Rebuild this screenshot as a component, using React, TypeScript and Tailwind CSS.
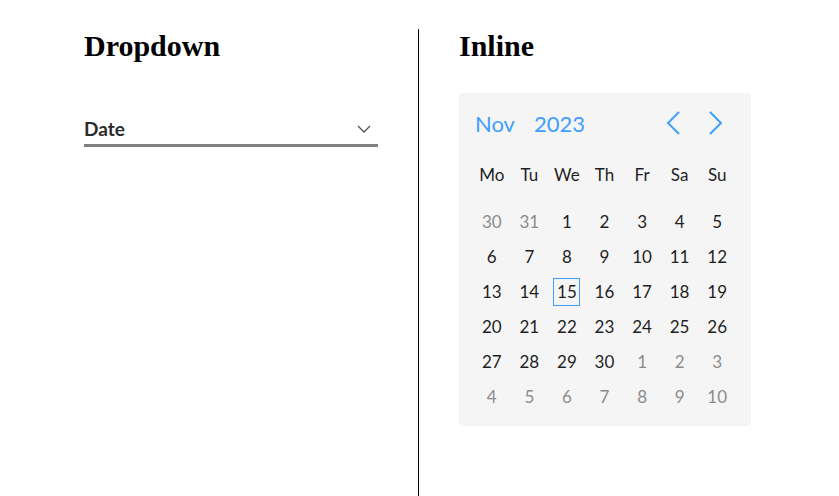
const weekdays = ["Mo", "Tu", "We", "Th", "Fr", "Sa", "Su"];

// 6 weeks shown, Nov 2023 starts on a Wednesday
const days: { d: number; muted: boolean }[] = [
	{ d: 30, muted: true },
	{ d: 31, muted: true },
	...Array.from({ length: 30 }, (_, i) => ({ d: i + 1, muted: false })),
	...Array.from({ length: 10 }, (_, i) => ({ d: i + 1, muted: true })),
];

const Chevron = ({ dir }: { dir: "left" | "right" }) => (
	<svg width="14" height="24" viewBox="0 0 14 24" fill="none" stroke="currentColor" strokeWidth="2">
		<polyline points={dir === "left" ? "13,1 2,12 13,23" : "1,1 12,12 1,23"} />
	</svg>
);

const Calendar = () => (
	<div className="w-[292px] rounded-[4px] bg-[#f5f5f5] px-[14px] pt-[13px] pb-[12px] font-['Lato',sans-serif]">
		<div className="flex h-[34px] items-center text-[22px] text-[#409eff]">
			<span className="ml-[2px]">Nov</span>
			<span className="ml-[19px]">2023</span>
			<div className="ml-auto mr-[14px] flex items-center gap-[29px]">
				<Chevron dir="left" />
				<Chevron dir="right" />
			</div>
		</div>
		<div className="mt-[17px] grid w-[263px] grid-cols-7">
			{weekdays.map((w) => (
				<div key={w} className="flex h-[35px] items-center justify-center text-[17px] text-[#1f1f1f]">
					{w}
				</div>
			))}
		</div>
		<div className="mt-[12px] grid w-[263px] grid-cols-7">
			{days.map((day, i) => (
				<div key={i} className="flex h-[35px] items-center justify-center">
					<span
						className={`flex h-[28px] w-[27px] items-center justify-center text-[17px] ${
							day.muted ? "text-[#8c8c8c]" : "text-[#1f1f1f]"
						} ${!day.muted && day.d === 15 ? "border border-[#409eff]" : ""}`}
					>
						{day.d}
					</span>
				</div>
			))}
		</div>
	</div>
);

export default function App() {
	return (
		<div className="flex min-h-[496px] bg-white pt-[29px] font-['Liberation_Serif',serif]">
			<div className="ml-[44px] w-[375px] border-r border-black px-10">
				<h2 className="text-[30px] font-bold leading-[33px] text-black">Dropdown</h2>
				<div className="mt-[55px] flex h-[30px] items-start justify-between border-b-[3px] border-[#808080] pr-[7px] font-['Lato',sans-serif]">
					<span className="text-[19px] font-bold leading-[24px] text-[#2b2b2b]">Date</span>
					<svg className="mt-[8px]" width="14" height="8" viewBox="0 0 14 8" fill="none" stroke="#555" strokeWidth="1.3">
						<polyline points="1,1 7,7 13,1" />
					</svg>
				</div>
			</div>
			<div className="pl-10">
				<h2 className="text-[30px] font-bold leading-[33px] text-black">Inline</h2>
				<div className="mt-[31px]">
					<Calendar />
				</div>
			</div>
		</div>
	);
}
